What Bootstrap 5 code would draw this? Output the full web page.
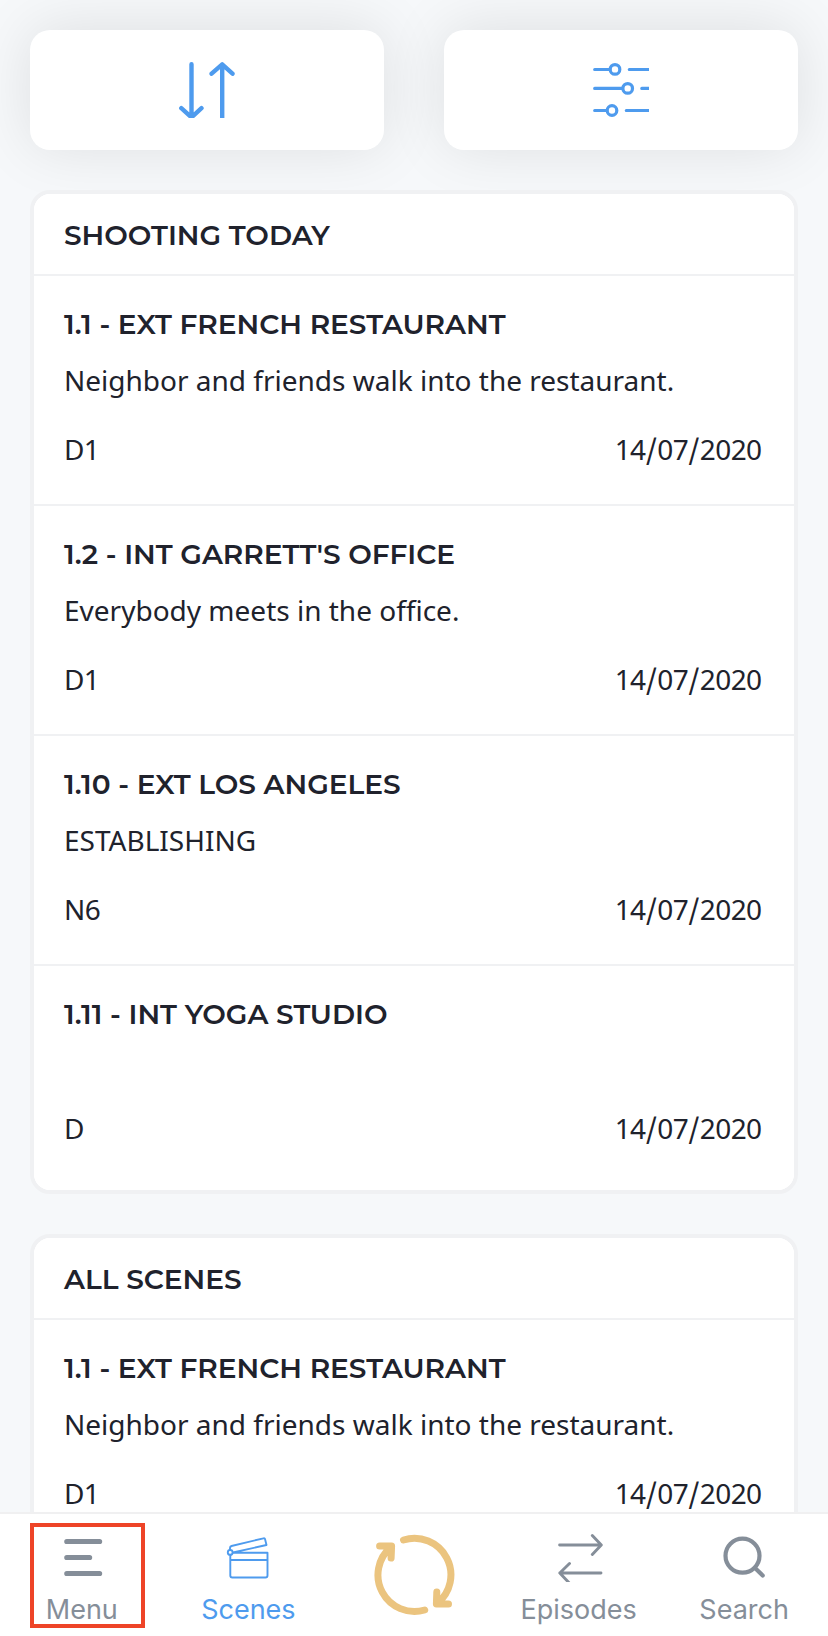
<!DOCTYPE html>
<html lang="en">
<head>
<meta charset="utf-8">
<meta name="viewport" content="width=device-width, initial-scale=1">
<title>Scenes</title>
<link href="https://cdn.jsdelivr.net/npm/bootstrap@5.3.0/dist/css/bootstrap.min.css" rel="stylesheet">
<style>
body{background:#f6f8fa;color:#20222c;font-family:"Noto Sans",sans-serif;font-size:28px;line-height:40px}
.tool-btn{height:120px;border-radius:20px;background:#fff;color:#4e9bee;border:0;box-shadow:0 -2px 60px rgba(0,0,0,.1)}
.tools{gap:60px;padding:30px 30px 40px}
.scroll-area{min-height:0}
.scene-card{border:4px solid #f0f1f3;border-radius:20px;margin:0 30px 40px;background:#fff;position:relative;flex-shrink:0;overflow:hidden;color:inherit}
.scene-card .card-header{height:82px;padding:21px 30px 0;background:#fff;border-bottom:2px solid #f0f1f3}
.heading{font-family:Montserrat,Inter,sans-serif;font-weight:600;font-size:28px;line-height:40px;letter-spacing:-.02px;margin:0;white-space:nowrap}
.list-group-flush>.scene{height:230px;padding:28px 30px 0;border:0;border-bottom:2px solid #f0f1f3;color:inherit}
.list-group-flush>.scene:last-child{height:224px;border-bottom:0}
.scene .desc{height:40px;margin:16px 0 29px;white-space:nowrap}
.scene .desc:empty{height:29px}
.meta{letter-spacing:-.6px}
.meta .date{margin-right:2.500px}
.meta i{font-style:normal;font-weight:500;font-family:"Noto Sans CJK SC",sans-serif;line-height:1;letter-spacing:.3px;padding-left:.5px}
.tabbar{height:124px;border-top:2px solid #f0f0f1;background:#fff;font-family:Inter,sans-serif;font-size:27px;color:#858e99}
.tab{width:20%;color:inherit;text-decoration:none;padding-top:12px;line-height:34px}
.tab svg{margin-bottom:7px}
.tab span{margin-left:-2px}
.tab.active{color:#4e9bee}
.tab.active span{margin-left:0}
.tab.sync{padding-top:19px;color:#ebc47f}
.highlight{left:30px;top:9px;width:115px;height:105px;border:4px solid #ee4427}
svg{fill:none;stroke:currentColor;flex-shrink:0;display:block}
</style>
</head>
<body>
<div class="vh-100 d-flex flex-column overflow-hidden">
<main class="scroll-area flex-fill overflow-hidden d-flex flex-column">
  <div class="tools d-flex">
    <button class="tool-btn flex-fill d-flex align-items-center justify-content-center" aria-label="Sort">
      <svg width="56" height="56" stroke-width="4.4" stroke-linecap="round" stroke-linejoin="round"><path d="M12.5 2.2V55M2.3 46.2l10.2 9.2 10-9.2M43.2 60V2.5M32.6 11.7l10.6-9.3 10.3 9.3"/></svg>
    </button>
    <button class="tool-btn flex-fill d-flex align-items-center justify-content-center" aria-label="Filter">
      <svg width="56" height="56" stroke-width="3.2" stroke-linecap="round"><path d="M1.700 7.500h15M36.300 7.500H60M1.700 26.400h27M48.800 26.400H60M1.700 48.500h12M33.300 48.500H60"/><circle cx="22" cy="7.400" r="4.800"/><circle cx="34.700" cy="26.400" r="4.800"/><circle cx="19" cy="48.500" r="4.800"/></svg>
    </button>
  </div>
  <section class="card scene-card">
    <div class="card-header"><h2 class="heading">SHOOTING TODAY</h2></div>
    <div class="list-group list-group-flush">
      <article class="list-group-item scene"><h3 class="heading">1.1 - EXT FRENCH RESTAURANT</h3><p class="desc">Neighbor and friends walk into the restaurant.</p><div class="meta d-flex justify-content-between"><span>D1</span><span class="date">14<i>/</i>07<i>/</i>2020</span></div></article>
      <article class="list-group-item scene"><h3 class="heading">1.2 - INT GARRETT'S OFFICE</h3><p class="desc">Everybody meets in the office.</p><div class="meta d-flex justify-content-between"><span>D1</span><span class="date">14<i>/</i>07<i>/</i>2020</span></div></article>
      <article class="list-group-item scene"><h3 class="heading">1.10 - EXT LOS ANGELES</h3><p class="desc">ESTABLISHING</p><div class="meta d-flex justify-content-between"><span>N6</span><span class="date">14<i>/</i>07<i>/</i>2020</span></div></article>
      <article class="list-group-item scene"><h3 class="heading">1.11 - INT YOGA STUDIO</h3><p class="desc"></p><div class="meta d-flex justify-content-between"><span>D</span><span class="date">14<i>/</i>07<i>/</i>2020</span></div></article>
    </div>
  </section>
  <section class="card scene-card">
    <div class="card-header"><h2 class="heading">ALL SCENES</h2></div>
    <div class="list-group list-group-flush">
      <article class="list-group-item scene"><h3 class="heading">1.1 - EXT FRENCH RESTAURANT</h3><p class="desc">Neighbor and friends walk into the restaurant.</p><div class="meta d-flex justify-content-between"><span>D1</span><span class="date">14<i>/</i>07<i>/</i>2020</span></div></article>
    </div>
  </section>
</main>
<nav class="tabbar d-flex flex-shrink-0 position-relative">
  <a class="tab d-flex flex-column align-items-center" href="#"><svg width="60" height="60" stroke-width="5.2" stroke-linecap="round"><path d="M13.8 15.5h32.8M13.8 31.5h22.8M13.8 47.5h32.8"/></svg><span>Menu</span></a>
  <a class="tab active d-flex flex-column align-items-center" href="#"><svg width="60" height="60" stroke-width="1.9" stroke-linejoin="round"><path d="M12.300 28.500V49.500q0 2 2 2H47.500q2 0 2-2V26.800H15M12.300 34H49.500M12 24v-2q0-1.500 1.500-2L45.500 12.300q1.200-.3 1.500.8L48.500 19 15 26.500"/><circle cx="12.200" cy="26.400" r="2.400"/></svg><span>Scenes</span></a>
  <a class="tab sync d-flex flex-column align-items-center" href="#" aria-label="Sync"><svg width="84" height="84" stroke-width="7" stroke-linecap="round" stroke-linejoin="round"><path d="M31.500 7A36.500 36.500 0 0 1 65 70.500M64.800 59l-.4 12H76.500M52.700 77A36.500 36.500 0 0 1 19 14M7.600 12.900H19.600L19.100 25"/></svg></a>
  <a class="tab d-flex flex-column align-items-center" href="#"><svg class="mb-0" width="60" height="56" stroke-width="2.9" stroke-linecap="round" stroke-linejoin="round"><path d="M9.600 19H51M42.300 9.500l9 9.500-9 9.500M51 47H9.800M19.500 37.500L9.800 47l9.700 10.300"/></svg><span style="margin-top:11px">Episodes</span></a>
  <a class="tab d-flex flex-column align-items-center" href="#"><svg width="60" height="60" stroke-width="4.200" stroke-linecap="round"><circle cx="27.500" cy="29.700" r="17"/><path d="M40 42l7.700 7.500"/></svg><span>Search</span></a>
  <div class="highlight position-absolute"></div>
</nav>
</div>
<script src="https://cdn.jsdelivr.net/npm/bootstrap@5.3.0/dist/js/bootstrap.bundle.min.js"></script>
</body>
</html>
